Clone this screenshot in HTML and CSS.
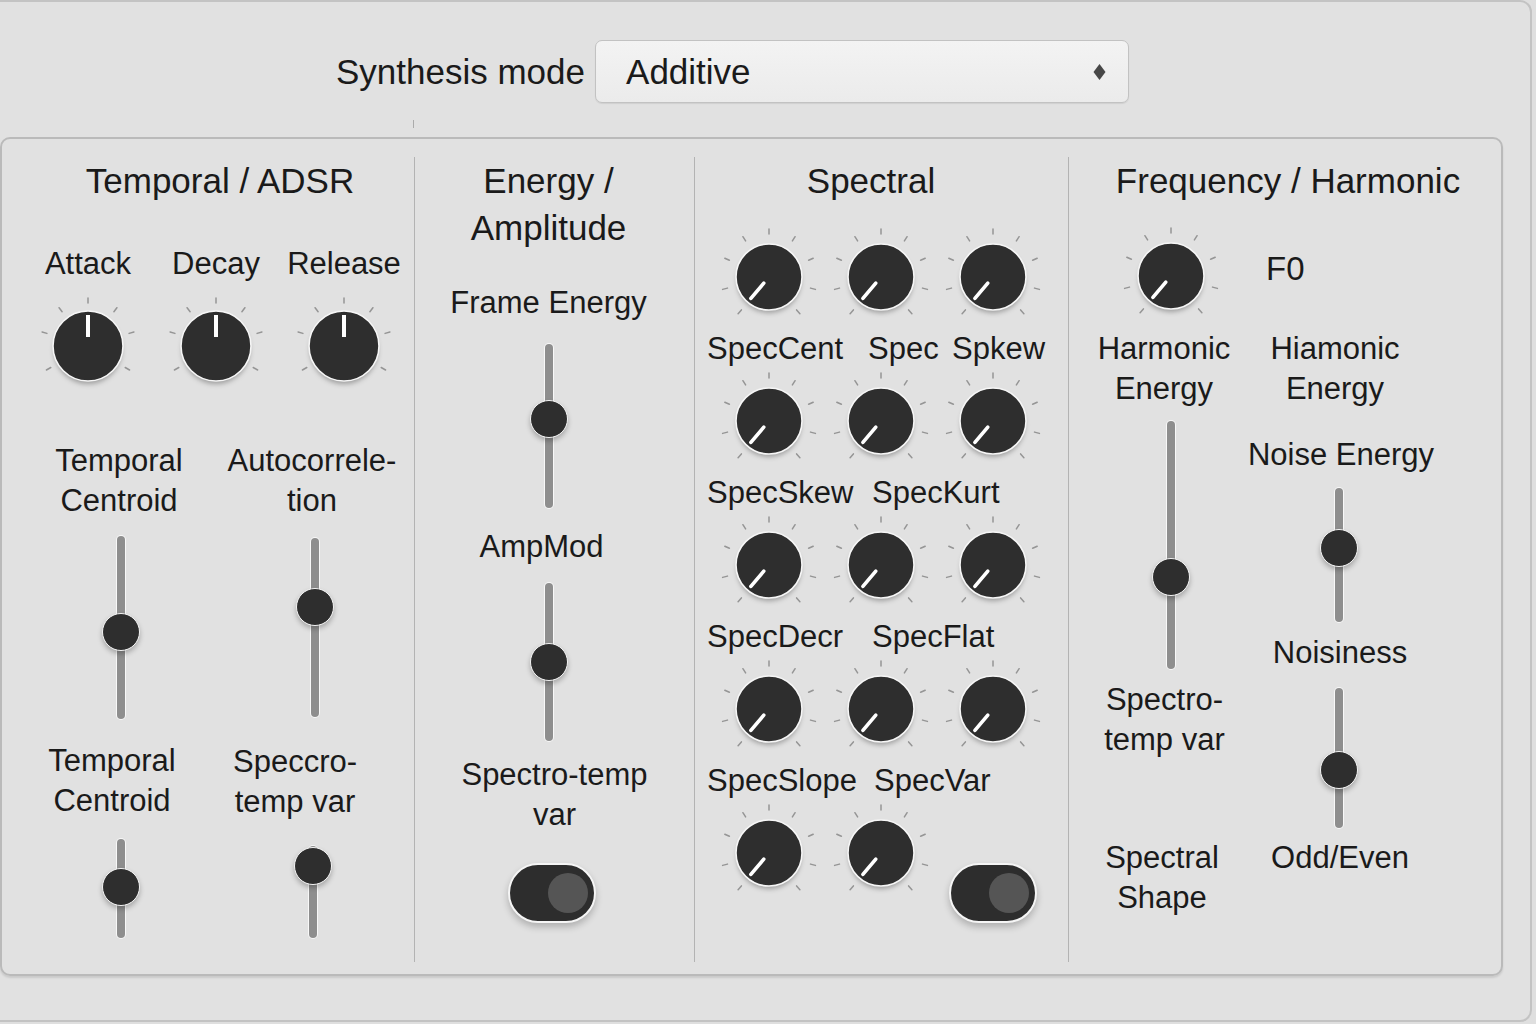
FILE: index.html
```html
<!DOCTYPE html>
<html lang="en">
<head>
<meta charset="utf-8">
<title>Synthesis</title>
<link rel="stylesheet" href="styles.css">
</head>
<body>
<svg class="defs" aria-hidden="true">
  <defs>
    <filter id="ksh" x="-40%" y="-40%" width="180%" height="180%"><feGaussianBlur stdDeviation="2.5"/></filter>
    <g id="knob-up">
      <g stroke="#959595" stroke-width="1.5" stroke-linecap="round">
        <line x1="0" y1="-43" x2="0" y2="-48"/>
        <line x1="25.9" y1="-34.3" x2="28.9" y2="-38.3"/>
        <line x1="-25.9" y1="-34.3" x2="-28.9" y2="-38.3"/>
        <line x1="41.1" y1="-12.6" x2="45.9" y2="-14"/>
        <line x1="-41.1" y1="-12.6" x2="-45.9" y2="-14"/>
        <line x1="37.2" y1="21.5" x2="41.6" y2="24"/>
        <line x1="-37.2" y1="21.5" x2="-41.6" y2="24"/>
      </g>
      <circle cx="0" cy="4" r="34" fill="#000" fill-opacity=".3" filter="url(#ksh)"/>
      <circle r="35" fill="#2e2e2e" stroke="#f6f6f6" stroke-width="1.6"/>
      <line x1="0" y1="-31" x2="0" y2="-9" stroke="#fff" stroke-width="4"/>
    </g>
    <g id="knob-dn">
      <g stroke="#959595" stroke-width="1.5" stroke-linecap="round">
        <line x1="0" y1="-43" x2="0" y2="-48"/>
        <line x1="23.4" y1="-36.1" x2="26.1" y2="-40.3"/>
        <line x1="-23.4" y1="-36.1" x2="-26.1" y2="-40.3"/>
        <line x1="39.6" y1="-16.8" x2="44.2" y2="-18.8"/>
        <line x1="-39.6" y1="-16.8" x2="-44.2" y2="-18.8"/>
        <line x1="41.5" y1="11.1" x2="46.4" y2="12.4"/>
        <line x1="-41.5" y1="11.1" x2="-46.4" y2="12.4"/>
        <line x1="27.6" y1="32.9" x2="30.9" y2="36.8"/>
        <line x1="-27.6" y1="32.9" x2="-30.9" y2="36.8"/>
      </g>
      <circle cx="0" cy="4" r="32" fill="#000" fill-opacity=".3" filter="url(#ksh)"/>
      <circle r="33" fill="#2e2e2e" stroke="#f6f6f6" stroke-width="1.6"/>
      <line x1="-5.2" y1="6.1" x2="-18.1" y2="21.4" stroke="#fff" stroke-width="3.6" stroke-linecap="round"/>
    </g>
  </defs>
</svg>

<div class="window">
  <div class="header">
    <span class="mode-label">Synthesis mode</span>
    <div class="select">
      <span>Additive</span>
      <svg class="diamond" viewBox="0 0 12 16"><path d="M6 0 L12 8 L6 16 L0 8 Z" fill="#474747"/></svg>
    </div>
  </div>
  <div class="tickrow"><div class="tick"></div></div>

  <div class="panel">
    <!-- Temporal / ADSR -->
    <section class="col col1">
      <div class="title title-adsr">Temporal / ADSR</div>
      <div class="adsr-row">
        <div class="kcell"><div class="lbl">Attack</div><svg class="knob" viewBox="-50 -50 100 100"><use href="#knob-up"/></svg></div>
        <div class="kcell"><div class="lbl">Decay</div><svg class="knob" viewBox="-50 -50 100 100"><use href="#knob-up"/></svg></div>
        <div class="kcell"><div class="lbl">Release</div><svg class="knob" viewBox="-50 -50 100 100"><use href="#knob-up"/></svg></div>
      </div>
      <div class="pair pair1">
        <div class="sub">
          <div class="lbl">Temporal<br>Centroid</div>
          <div class="slider s-tc1" style="--y:96px"><div class="track"></div><div class="thumb"></div></div>
          <div class="lbl l-tc2">Temporal<br>Centroid</div>
          <div class="slider s-tc2" style="--y:48px"><div class="track"></div><div class="thumb"></div></div>
        </div>
        <div class="sub">
          <div class="lbl">Autocorrele-<br>tion</div>
          <div class="slider s-auto" style="--y:69px"><div class="track"></div><div class="thumb"></div></div>
          <div class="lbl l-spc">Speccro-<br>temp var</div>
          <div class="slider s-spc" style="--y:20px"><div class="track"></div><div class="thumb"></div></div>
        </div>
      </div>
    </section>

    <!-- Energy / Amplitude -->
    <section class="col col2">
      <div class="title">Energy /<br>Amplitude</div>
      <div class="lbl l-frame">Frame Energy</div>
      <div class="slider s-frame" style="--y:75px"><div class="track"></div><div class="thumb"></div></div>
      <div class="lbl l-amp">AmpMod</div>
      <div class="slider s-amp" style="--y:79px"><div class="track"></div><div class="thumb"></div></div>
      <div class="lbl l-stv">Spectro-temp<br>var</div>
      <div class="toggle t-energy"><div class="toggle-thumb"></div></div>
    </section>

    <!-- Spectral -->
    <section class="col col3">
      <div class="title title-spec">Spectral</div>
      <div class="kgrid">
        <div class="kg-cell"><svg class="knob" viewBox="-50 -50 100 100"><use href="#knob-dn"/></svg></div>
        <div class="kg-cell"><svg class="knob" viewBox="-50 -50 100 100"><use href="#knob-dn"/></svg></div>
        <div class="kg-cell"><svg class="knob" viewBox="-50 -50 100 100"><use href="#knob-dn"/></svg></div>
        <div class="kg-labels"><span class="w-a">SpecCent</span><span class="w-b">Spec</span><span>Spkew</span></div>

        <div class="kg-cell"><svg class="knob" viewBox="-50 -50 100 100"><use href="#knob-dn"/></svg></div>
        <div class="kg-cell"><svg class="knob" viewBox="-50 -50 100 100"><use href="#knob-dn"/></svg></div>
        <div class="kg-cell"><svg class="knob" viewBox="-50 -50 100 100"><use href="#knob-dn"/></svg></div>
        <div class="kg-labels"><span class="w-1">SpecSkew</span><span>SpecKurt</span></div>

        <div class="kg-cell"><svg class="knob" viewBox="-50 -50 100 100"><use href="#knob-dn"/></svg></div>
        <div class="kg-cell"><svg class="knob" viewBox="-50 -50 100 100"><use href="#knob-dn"/></svg></div>
        <div class="kg-cell"><svg class="knob" viewBox="-50 -50 100 100"><use href="#knob-dn"/></svg></div>
        <div class="kg-labels"><span class="w-1">SpecDecr</span><span>SpecFlat</span></div>

        <div class="kg-cell"><svg class="knob" viewBox="-50 -50 100 100"><use href="#knob-dn"/></svg></div>
        <div class="kg-cell"><svg class="knob" viewBox="-50 -50 100 100"><use href="#knob-dn"/></svg></div>
        <div class="kg-cell"><svg class="knob" viewBox="-50 -50 100 100"><use href="#knob-dn"/></svg></div>
        <div class="kg-labels"><span class="w-2">SpecSlope</span><span>SpecVar</span></div>

        <div class="kg-cell"><svg class="knob" viewBox="-50 -50 100 100"><use href="#knob-dn"/></svg></div>
        <div class="kg-cell"><svg class="knob" viewBox="-50 -50 100 100"><use href="#knob-dn"/></svg></div>
        <div class="kg-cell kg-toggle"><div class="toggle"><div class="toggle-thumb"></div></div></div>
      </div>
    </section>

    <!-- Frequency / Harmonic -->
    <section class="col col4">
      <div class="title title-freq">Frequency / Harmonic</div>
      <div class="pair pair4">
        <div class="sub">
          <svg class="knob k-f0" viewBox="-50 -50 100 100"><use href="#knob-dn"/></svg>
          <div class="lbl l-he">Harmonic<br>Energy</div>
          <div class="slider s-he" style="--y:156px"><div class="track"></div><div class="thumb"></div></div>
          <div class="lbl l-stv2">Spectro-<br>temp var</div>
          <div class="lbl l-shape">Spectral<br>Shape</div>
        </div>
        <div class="sub">
          <div class="f0">F0</div>
          <div class="lbl l-hia">Hiamonic<br>Energy</div>
          <div class="lbl l-noise">Noise Energy</div>
          <div class="slider s-noise" style="--y:60px"><div class="track"></div><div class="thumb"></div></div>
          <div class="lbl l-nois">Noisiness</div>
          <div class="slider s-oe" style="--y:82px"><div class="track"></div><div class="thumb"></div></div>
          <div class="lbl l-oe">Odd/Even</div>
        </div>
      </div>
    </section>
  </div>
</div>
</body>
</html>
```

FILE: styles.css
```css
* { box-sizing: border-box; }
html, body { margin: 0; padding: 0; }
body {
  width: 1536px;
  height: 1024px;
  overflow: hidden;
  background: #dfdfdf;
  font-family: "Liberation Sans", Arial, sans-serif;
  color: #1a1a1a;
}
.defs { position: absolute; width: 0; height: 0; overflow: hidden; }

.window {
  width: 1532px;
  height: 1022px;
  border: 2px solid #c3c3c3;
  border-left: 0;
  border-radius: 0 12px 12px 0;
  background: #e1e1e1;
}

/* header */
.header {
  display: flex;
  align-items: center;
  height: 63px;
  margin-top: 38px;
  padding-left: 336px;
}
.mode-label { font-size: 35px; margin-right: 10px; white-space: nowrap; }
.select {
  width: 534px;
  height: 63px;
  display: flex;
  align-items: center;
  justify-content: space-between;
  padding: 0 22px 0 30px;
  font-size: 35px;
  background: linear-gradient(#f3f3f3, #ebebeb);
  border: 1.5px solid #c2c2c2;
  border-radius: 7px;
  box-shadow: 0 1px 1px rgba(0,0,0,.08);
}
.diamond { width: 13px; height: 16px; display: block; }

.tickrow { height: 34px; padding-top: 17px; }
.tick { width: 1px; height: 8px; margin-left: 413px; background: #ababab; }

/* panel */
.panel {
  width: 1503px;
  height: 839px;
  display: flex;
  padding: 18px 0 12px;
  border: 2px solid #bababa;
  border-radius: 10px;
  box-shadow: 0 2px 2px rgba(0,0,0,.10);
}
.col {
  height: 805px;
  display: flex;
  flex-direction: column;
  align-items: center;
}
.col1 { width: 412px; align-items: stretch; }
.col2 { width: 280px; border-left: 1px solid #b3b3b3; padding-right: 12px; }
.col3 { width: 374px; border-left: 1px solid #b3b3b3; }
.col4 { width: 433px; border-left: 1px solid #b3b3b3; }

.title {
  font-size: 35px;
  line-height: 47px;
  text-align: center;
  white-space: nowrap;
}
.lbl {
  font-size: 31px;
  line-height: 40px;
  text-align: center;
  white-space: nowrap;
}
.knob { width: 100px; height: 100px; display: block; overflow: visible; }

/* column 1 */
.title-adsr { padding-left: 24px; }
.adsr-row { display: flex; margin: 40px 0 0 22px; }
.kcell { width: 128px; display: flex; flex-direction: column; align-items: center; }
.kcell .knob { margin-top: 12px; }

.pair { display: flex; }
.sub { display: flex; flex-direction: column; align-items: center; }
.pair1 { margin: 45px 0 0 27px; gap: 13px; }
.pair1 .sub { width: 180px; }

/* sliders */
.slider {
  position: relative;
  width: 38px;
  display: flex;
  justify-content: center;
}
.track {
  width: 8px;
  height: 100%;
  border-radius: 4px;
  background: #8e8e8e;
  box-shadow: 0 0 0 1px rgba(255,255,255,.75);
}
.thumb {
  position: absolute;
  left: 0;
  top: calc(var(--y) - 19px);
  width: 38px;
  height: 38px;
  border-radius: 50%;
  background: #2e2e2e;
  border: 1.5px solid #f5f5f5;
  box-shadow: 0 3px 5px rgba(0,0,0,.25);
}
.s-tc1 { height: 183px; margin: 15px 0 0 4px; }
.l-tc2 { margin: 22px 14px 0 0; }
.s-tc2 { height: 99px; margin: 18px 0 0 4px; }
.s-auto { height: 179px; margin: 17px 0 0 6px; }
.l-spc { margin: 25px 34px 0 0; }
.s-spc { height: 92px; margin: 24px 0 0 2px; }

/* column 2 */
.l-frame { margin-top: 32px; }
.s-frame { height: 164px; margin-top: 21px; }
.l-amp { margin: 19px 14px 0 0; }
.s-amp { height: 158px; margin-top: 16px; }
.l-stv { margin: 14px 0 0 12px; }
.t-energy { margin: 28px 0 0 7px; width: 92px; }

/* toggles */
.toggle {
  width: 88px;
  height: 60px;
  border-radius: 30px;
  background: #2d2d2d;
  border: 2px solid #f5f5f5;
  box-shadow: 0 4px 7px rgba(0,0,0,.22);
  display: flex;
  align-items: center;
  justify-content: flex-end;
  padding-right: 6px;
}
.toggle-thumb { width: 40px; height: 40px; border-radius: 50%; background: #555; }

/* column 3 */
.title-spec { margin-right: 21px; }
.kgrid {
  align-self: flex-start;
  margin: 23px 0 0 18px;
  display: grid;
  grid-template-columns: repeat(3, 112px);
  grid-template-rows: 100px 40px 100px 40px 100px 40px 100px 40px 100px;
  row-gap: 2px;
}
.kg-cell { display: flex; justify-content: center; }
.kg-labels {
  grid-column: 1 / -1;
  display: flex;
  margin-left: -6px;
  font-size: 31px;
  line-height: 40px;
  white-space: nowrap;
}
.w-a { width: 161px; }
.w-b { width: 84px; }
.w-1 { width: 165px; }
.w-2 { width: 167px; }
.kg-toggle { align-items: flex-start; }
.kg-toggle .toggle { margin-top: 60px; }

/* column 4 */
.title-freq { margin-left: 6px; }
.pair4 { align-self: flex-start; margin: 22px 0 0 18px; gap: 11px; }
.pair4 .sub { width: 160px; }
.k-f0 { margin-left: 8px; }
.l-he { margin: 3px 6px 0 0; }
.s-he { height: 248px; margin: 12px 0 0 8px; }
.l-stv2 { margin: 11px 5px 0 0; }
.l-shape { margin: 78px 10px 0 0; }
.f0 {
  align-self: flex-start;
  margin: 23px 0 0 8px;
  font-size: 33px;
  line-height: 40px;
}
.l-hia { margin: 40px 6px 0 0; }
.l-noise { margin: 26px 0 0 6px; }
.s-noise { height: 134px; margin: 13px 0 0 2px; }
.l-nois { margin: 11px 0 0 4px; }
.s-oe { height: 140px; margin: 15px 0 0 2px; }
.l-oe { margin: 10px 0 0 4px; }
```
